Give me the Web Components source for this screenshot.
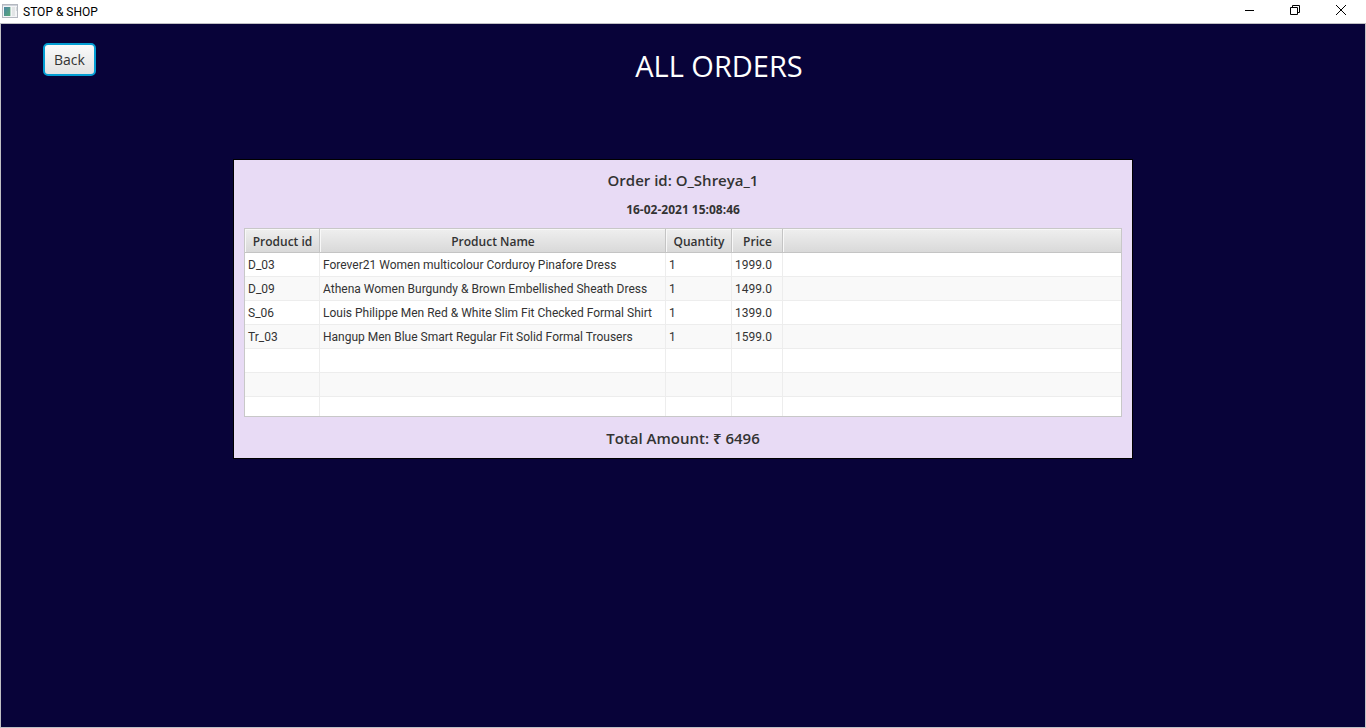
<!DOCTYPE html>
<html lang="en">
<head>
<meta charset="utf-8">
<title>STOP &amp; SHOP</title>
<style>
  html, body { height: 100%; margin: 0; }
  body { font-family: "Open Sans", "Noto Sans", sans-serif; font-size: 12px; color: #333; background: #fff; }
</style>
</head>
<body>
<app-window caption="STOP &amp; SHOP">
  <page-header heading="ALL ORDERS"></page-header>
  <order-card order-id="O_Shreya_1" date="16-02-2021 15:08:46" total="6496">
    <order-table></order-table>
  </order-card>
</app-window>

<script>
class AppWindow extends HTMLElement {
  connectedCallback() {
    this.attachShadow({ mode: "open" }).innerHTML = `
      <style>
        :host { display: flex; flex-direction: column; min-height: 100vh; }
        .bar { display: flex; align-items: center; height: 23px; background: #fff; color: #000; }
        .app-icon { display: block; margin: 0 5px 2px 2px; }
        .caption { flex: 1; padding-top: 2px; line-height: 21px; font-family: Roboto, sans-serif; font-size: 12px; }
        .bar button { display: grid; place-items: center; width: 46px; height: 23px; padding: 0 0 3px; border: 0; background: none; }
        .bar .close { margin-right: 2px; }
        main { flex: 1; display: flex; flex-direction: column; border: 1px solid #c0c0c4; background: #080339; }
      </style>
      <div class="bar">
        <svg class="app-icon" width="16" height="14" viewBox="0 0 16 14" aria-hidden="true">
          <defs><linearGradient id="g" x1="0" y1="0" x2="1" y2="1">
            <stop offset="0" stop-color="#4c86a4"/><stop offset="1" stop-color="#58a878"/>
          </linearGradient></defs>
          <rect x=".5" y=".5" width="15" height="13" fill="#f4f5f7" stroke="#b4b8c0"/>
          <rect x="1" y="1" width="14" height="1" fill="#cfd3da"/>
          <rect x="2" y="3" width="6" height="9" fill="url(#g)"/>
          <rect x="8" y="3" width="1" height="9" fill="#b9d6c8"/>
          <rect x="10" y="3" width="3" height="9" fill="#e2e5e6"/>
          <rect x="14" y="3" width="1" height="4" fill="#d5dadd"/>
        </svg>
        <span class="caption"></span>
        <button type="button" aria-label="Minimize"><svg width="10" height="10" viewBox="0 0 10 10"><path d="M1 5.5h9" stroke="#000"/></svg></button>
        <button type="button" aria-label="Restore"><svg width="10" height="10" viewBox="0 0 10 10" fill="none" stroke="#000"><path d="M.5 2.5h7v7h-7zM2.5 2.5v-2h7v7h-2"/></svg></button>
        <button type="button" class="close" aria-label="Close"><svg width="10" height="10" viewBox="0 0 10 10" stroke="#000"><path d="M0 0l10 10M10 0L0 10"/></svg></button>
      </div>
      <main><slot></slot></main>`;
    this.shadowRoot.querySelector(".caption").textContent = this.getAttribute("caption");
  }
}

class PageHeader extends HTMLElement {
  connectedCallback() {
    this.attachShadow({ mode: "open" }).innerHTML = `
      <style>
        :host { display: flex; align-items: flex-start; padding: 19px 23px 0 42px; }
        button { box-sizing: border-box; width: 53px; height: 33px; padding: 0; border: 2px solid #039ed3; border-radius: 5px;
          background: linear-gradient(#fafafa, #e2e2e2); color: #333; font-family: inherit; font-size: 14px; line-height: 28px; }
        h1 { flex: 1; margin: 0; text-align: center; font-size: 29px; font-weight: 400; line-height: 46px; color: #fff; }
      </style>
      <button type="button">Back</button>
      <h1></h1>`;
    this.shadowRoot.querySelector("h1").textContent = this.getAttribute("heading");
  }
}

class OrderCard extends HTMLElement {
  connectedCallback() {
    this.attachShadow({ mode: "open" }).innerHTML = `
      <style>
        :host { display: block; box-sizing: border-box; width: 900px; max-width: 100%; margin: 70px auto 0;
          padding: 10px; border: 1px solid #000; background: #e8dbf5; text-align: center; }
        h2, p { margin: 0; }
        h2, .total { font-size: 15px; font-weight: 600; line-height: 20px; }
        .date { margin: 11px 0 9px; font-size: 12px; font-weight: 700; line-height: 18px; }
        .total { margin-top: 11px; }
      </style>
      <h2></h2>
      <p class="date"></p>
      <slot></slot>
      <p class="total"></p>`;
    const put = (sel, text) => { this.shadowRoot.querySelector(sel).textContent = text; };
    put("h2", "Order id: " + this.getAttribute("order-id"));
    put(".date", this.getAttribute("date"));
    put(".total", "Total Amount: \u20B9 " + this.getAttribute("total"));
  }
}

class OrderTable extends HTMLElement {
  connectedCallback() {
    const rows = [
      ["D_03", "Forever21 Women multicolour Corduroy Pinafore Dress", "1", "1999.0"],
      ["D_09", "Athena Women Burgundy & Brown Embellished Sheath Dress", "1", "1499.0"],
      ["S_06", "Louis Philippe Men Red & White Slim Fit Checked Formal Shirt", "1", "1399.0"],
      ["Tr_03", "Hangup Men Blue Smart Regular Fit Solid Formal Trousers", "1", "1599.0"],
      [], [], []
    ];
    this.attachShadow({ mode: "open" }).innerHTML = `
      <style>
        :host { display: block; border: 1px solid #c8c8c8; background: #fff; }
        table { width: 100%; table-layout: fixed; border-collapse: separate; border-spacing: 0; text-align: left; }
        col.id { width: 75px; } col.name { width: 346px; } col.qty { width: 66px; } col.price { width: 51px; }
        th, td { box-sizing: border-box; height: 24px; padding: 2px 3px 0; font-size: 12px; line-height: 21px; white-space: nowrap; }
        th { padding: 2px 0 0 1px; border-right: 1px solid #c4c4c4; border-bottom: 1px solid #c4c4c4; box-shadow: inset 1px 1px #f8f8f8;
          background: linear-gradient(#efefef, #d9d9d9); font-weight: 600; text-align: center; }
        td { border-right: 1px solid #ededed; border-bottom: 1px solid #ededed; font-family: Roboto, sans-serif; }
        th:last-child, td:last-child { border-right: 0; }
        tr:nth-child(even) td { background: #f9f9f9; }
        tr:last-child td { height: 19px; border-bottom: 0; }
      </style>
      <table>
        <colgroup><col class="id"><col class="name"><col class="qty"><col class="price"><col></colgroup>
        <thead><tr><th scope="col">Product id</th><th scope="col">Product Name</th><th scope="col">Quantity</th><th scope="col">Price</th><th></th></tr></thead>
        <tbody></tbody>
      </table>`;
    const body = this.shadowRoot.querySelector("tbody");
    for (const row of rows) {
      const tr = body.insertRow();
      for (let i = 0; i < 5; i++) tr.insertCell().textContent = row[i] || "";
    }
  }
}

customElements.define("app-window", AppWindow);
customElements.define("page-header", PageHeader);
customElements.define("order-card", OrderCard);
customElements.define("order-table", OrderTable);
</script>
</body>
</html>
